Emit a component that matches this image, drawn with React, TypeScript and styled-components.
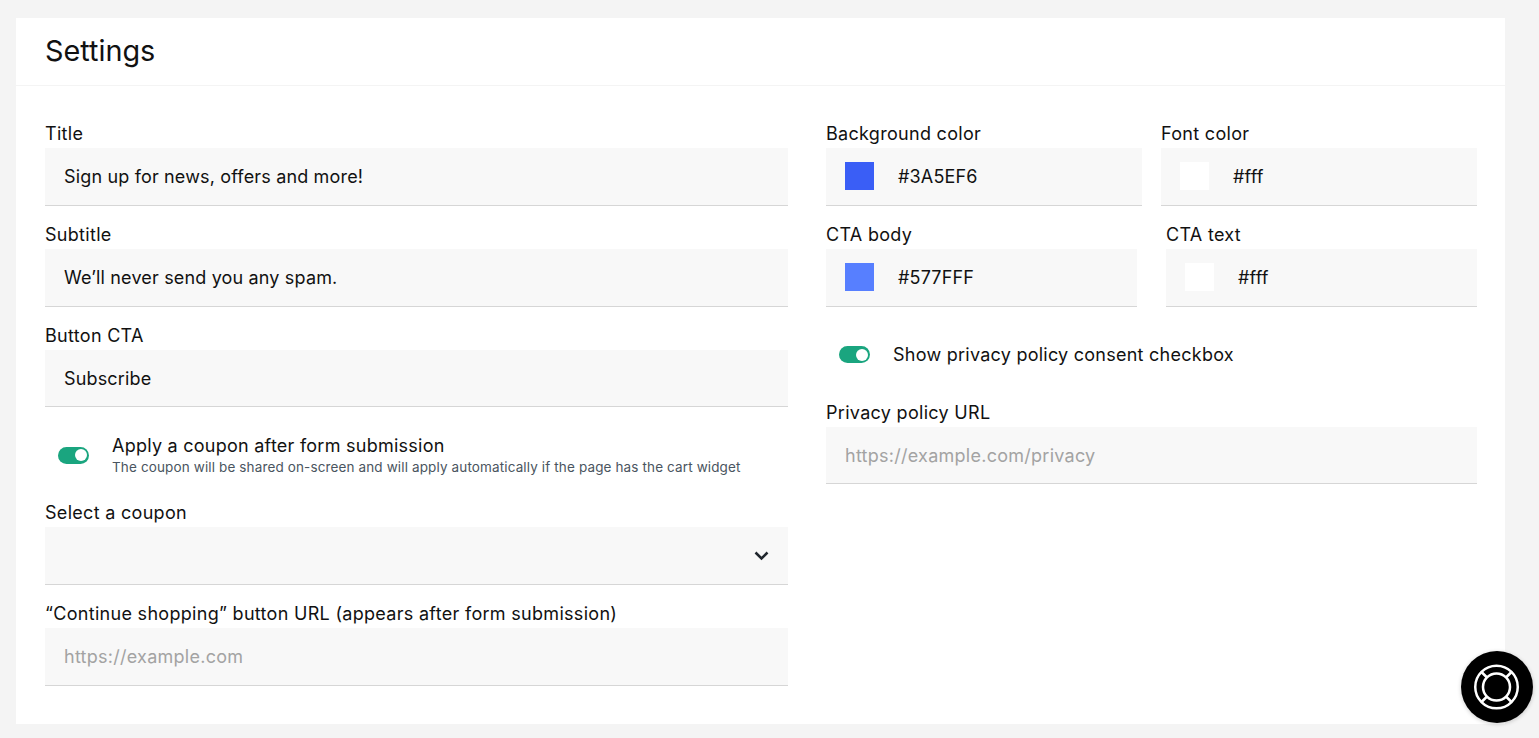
import React from 'react';
import styled, { createGlobalStyle } from 'styled-components';

const GlobalStyle = createGlobalStyle`
  html, body {
    margin: 0;
    padding: 0;
    background: #f4f4f4;
  }
  * {
    box-sizing: border-box;
  }
`;

const Field = ({ label, children }: { label: string; children: React.ReactNode }) => (
  <FieldRoot>
    <Label>{label}</Label>
    {children}
  </FieldRoot>
);

const ColorField = ({ label, color }: { label: string; color: string }) => (
  <Field label={label}>
    <InputBox>
      <Swatch $color={color} />
      <ColorValue>{color}</ColorValue>
    </InputBox>
  </Field>
);

const Switch = () => (
  <Track>
    <Knob />
  </Track>
);

const App = () => (
  <Page>
    <GlobalStyle />
    <Card>
      <Header>
        <Title>Settings</Title>
      </Header>
      <Body>
        <Column>
          <Field label="Title">
            <InputBox>Sign up for news, offers and more!</InputBox>
          </Field>
          <Field label="Subtitle">
            <InputBox>We’ll never send you any spam.</InputBox>
          </Field>
          <Field label="Button CTA">
            <InputBox>Subscribe</InputBox>
          </Field>
          <ToggleRow $height={57.6}>
            <Switch />
            <ToggleText>
              <ToggleLabel>Apply a coupon after form submission</ToggleLabel>
              <ToggleHint>
                The coupon will be shared on-screen and will apply automatically if the page has the cart widget
              </ToggleHint>
            </ToggleText>
          </ToggleRow>
          <Field label="Select a coupon">
            <SelectBox>
              <svg width="15" height="10" viewBox="0 0 15 10" fill="none">
                <path d="M1.5 1.5L7.5 7.5l6-6" stroke="#21272e" strokeWidth="2.5" />
              </svg>
            </SelectBox>
          </Field>
          <Field label="“Continue shopping” button URL (appears after form submission)">
            <InputBox $placeholder>https://example.com</InputBox>
          </Field>
        </Column>
        <Column>
          <ColorRow $gap={19}>
            <ColorField label="Background color" color="#3A5EF6" />
            <ColorField label="Font color" color="#fff" />
          </ColorRow>
          <ColorRow $gap={29}>
            <ColorField label="CTA body" color="#577FFF" />
            <ColorField label="CTA text" color="#fff" />
          </ColorRow>
          <ToggleRow $height={58}>
            <Switch />
            <ToggleLabel>Show privacy policy consent checkbox</ToggleLabel>
          </ToggleRow>
          <Field label="Privacy policy URL">
            <InputBox $placeholder>https://example.com/privacy</InputBox>
          </Field>
        </Column>
      </Body>
    </Card>
    <HelpButton>
      <svg width="50" height="50" viewBox="0 0 50 50" fill="none" stroke="#fff" strokeWidth="2.5">
        <circle cx="24.5" cy="25" r="21.25" />
        <circle cx="24.5" cy="25" r="13.5" />
        <path d="M9.5 10l5.5 5.5M39.5 10L34 15.5M9.5 40l5.5-5.5M39.5 40L34 34.5" />
      </svg>
    </HelpButton>
  </Page>
);

const Page = styled.div`
  min-height: 738px;
  padding: 18px 34px 14px 16px;
  font-family: Inter, "Liberation Sans", sans-serif;
  color: #21272e;
  background: #f4f4f4;
`;

const Card = styled.div`
  width: 1489px;
  background: #fff;
`;

const Header = styled.div`
  height: 68px;
  padding: 0 29px;
  display: flex;
  align-items: center;
  border-bottom: 1px solid #f4f4f4;
`;

const Title = styled.h1`
  margin: 0 0 3px;
  font-size: 28.8px;
  font-weight: 400;
  color: #111;
`;

const Body = styled.div`
  display: grid;
  grid-template-columns: 743px 651px;
  column-gap: 38px;
  padding: 38px 28px 38px 29px;
`;

const Column = styled.div`
  display: flex;
  flex-direction: column;
  align-items: stretch;
  gap: 19px;
`;

const FieldRoot = styled.div`
  display: flex;
  flex-direction: column;
  min-width: 0;
`;

const Label = styled.label`
  height: 24.2px;
  font-size: 18px;
  line-height: 20px;
  letter-spacing: 0.3px;
  color: #111;
`;

const InputBox = styled.div<{ $placeholder?: boolean }>`
  height: 57.6px;
  padding: 1px 19px 0;
  display: flex;
  align-items: center;
  font-size: 18px;
  letter-spacing: ${(p) => (p.$placeholder ? '0.26px' : '0.16px')};
  background: #f8f8f8;
  border-bottom: 1px solid #d6d6d6;
  color: ${(p) => (p.$placeholder ? '#a3a3a3' : '#111')};
`;

const SelectBox = styled(InputBox)`
  justify-content: flex-end;
  padding-right: 19px;
`;

const ColorRow = styled.div<{ $gap: number }>`
  display: grid;
  grid-template-columns: 1fr 1fr;
  column-gap: ${(p) => p.$gap}px;
`;

const Swatch = styled.span<{ $color: string }>`
  width: 29px;
  height: 28px;
  margin: 0 24px 2px 0;
  background: ${(p) => p.$color};
`;

const ColorValue = styled.span`
  font-size: 18px;
`;

const ToggleRow = styled.div<{ $height: number }>`
  height: ${(p) => p.$height}px;
  padding-left: 13px;
  display: flex;
  align-items: center;
  gap: 23px;
`;

const Track = styled.span`
  flex: none;
  width: 31px;
  height: 17px;
  padding: 0 2px;
  display: flex;
  align-items: center;
  justify-content: flex-end;
  border-radius: 9px;
  background: #1aa57f;
`;

const Knob = styled.span`
  width: 12px;
  height: 12px;
  border-radius: 50%;
  background: #fff;
`;

const ToggleText = styled.div`
  display: flex;
  flex-direction: column;
  gap: 3px;
`;

const ToggleLabel = styled.div`
  font-size: 18px;
  letter-spacing: 0.25px;
  color: #111;
`;

const ToggleHint = styled.div`
  font-size: 13.5px;
  letter-spacing: 0.13px;
  color: #4a5560;
`;

const HelpButton = styled.button`
  position: fixed;
  left: 1461px;
  top: 651px;
  width: 72px;
  height: 72px;
  padding: 0;
  display: flex;
  align-items: center;
  justify-content: center;
  border: 0;
  border-radius: 50%;
  background: #000;
  box-shadow: 0 1px 4px rgba(0, 0, 0, 0.2);
`;

export default App;
